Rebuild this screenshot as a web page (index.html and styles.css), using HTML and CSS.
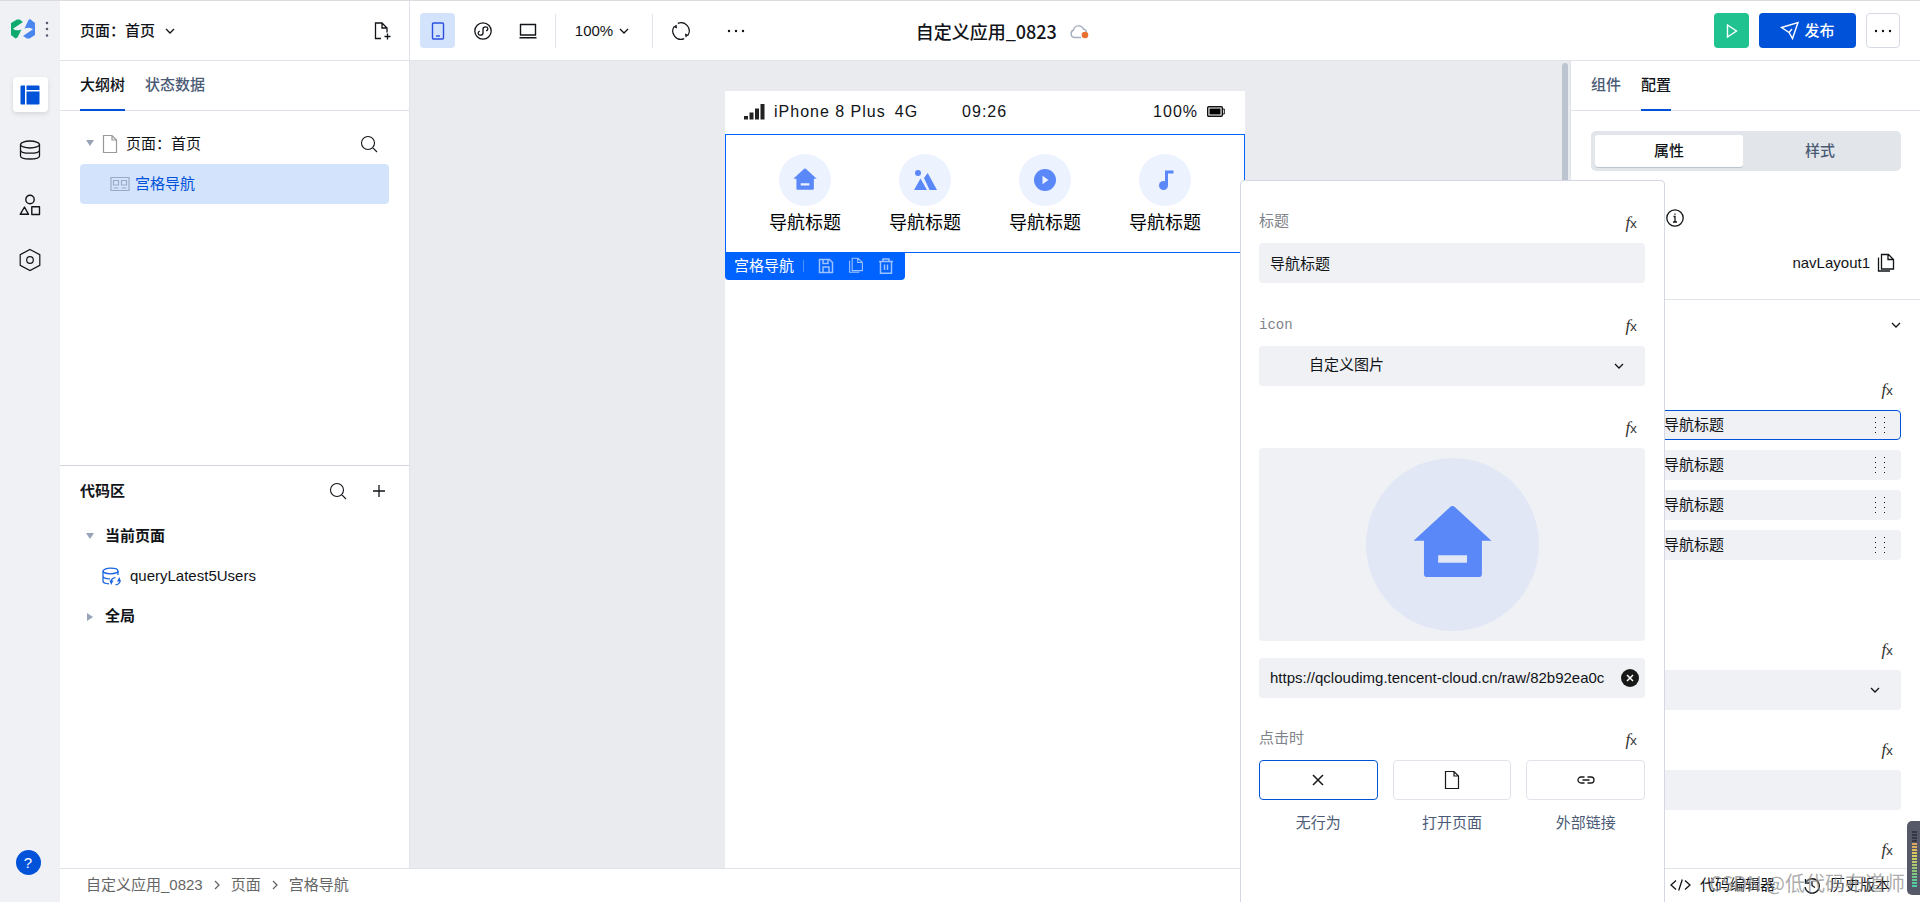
FILE: index.html
```html
<!DOCTYPE html>
<html lang="zh-CN">
<head>
<meta charset="utf-8">
<title>自定义应用_0823</title>
<link rel="stylesheet" href="styles.css">
</head>
<body>
<svg class="sprite" aria-hidden="true">
  <symbol id="chev" viewBox="0 0 10 10"><path d="M1 3l4 4 4-4" fill="none" stroke="currentColor" stroke-width="1.3"/></symbol>
  <symbol id="chev-r" viewBox="0 0 10 10"><path d="M3 1l4 4-4 4" fill="none" stroke="currentColor" stroke-width="1.3"/></symbol>
  <symbol id="search" viewBox="0 0 18 18"><path d="M8 1.5a6.5 6.5 0 1 0 0 13a6.5 6.5 0 1 0 0-13M12.7 12.7L17 17" fill="none" stroke="currentColor" stroke-width="1.1"/></symbol>
  <symbol id="page" viewBox="0 0 16 20"><path d="M1.5 1.5h8.500l4.500 4.500v12.500h-13zM10 1.500v4.500h4.500" fill="none" stroke="currentColor" stroke-width="1.2"/></symbol>
  <symbol id="copy" viewBox="0 0 18 20"><path d="M4.500 1.500h7l5 5v9.500h-12zM11 1.500v5h5.500M1.500 4.500v13.500h11.500" fill="none" stroke="currentColor" stroke-width="1.3"/></symbol>
  <symbol id="dots" viewBox="0 0 18 6"><path d="M2 3h.01M9 3h.01M16 3h.01" fill="none" stroke="currentColor" stroke-width="2.400" stroke-linecap="round"/></symbol>
  <symbol id="grip" viewBox="0 0 12 18"><path d="M1 1h1v1h-1zM10 1h1v1h-1zM1 6h1v1h-1zM10 6h1v1h-1zM1 11h1v1h-1zM10 11h1v1h-1zM1 16h1v1h-1zM10 16h1v1h-1z" fill="currentColor"/></symbol>
  <symbol id="house" viewBox="0 0 100 100"><path fill-rule="evenodd" fill="#5a88f8" d="M48.500 28.500q1.500-1.500 3 0L72.500 47.800H67V67q0 1.800-1.800 1.800H35.300q-1.800 0-1.800-1.800V47.800H27.500zM41.700 56.200v4.400h16.700v-4.400z"/></symbol>
</svg>

<div class="app">
  <nav class="rail" aria-label="主导航">
    <div class="brand">
      <svg width="24" height="20" viewBox="0 0 24 20"><path fill="#0faa70" d="M0 4L6 .5h2.500L12 3 2 9.800q3 2.700 8.500.7L6.500 18.500l-2 1L0 16z"/><path fill="#4a86f0" d="M24 16l-5.500 3.500H16L12 17l10-6.800q-3-2.700-8.500-.7L17.500 1l1.500-1L24 4z"/></svg>
      <svg width="4" height="18" viewBox="0 0 4 18"><path d="M2 3h.01M2 9h.01M2 15.500h.01" stroke="#555e70" stroke-width="2.600" stroke-linecap="round"/></svg>
    </div>
    <button class="rail-btn active" aria-label="页面"><svg width="20" height="20" viewBox="0 0 20 20"><path fill="#0052d9" d="M1.500.5H5v19H1.500Q.5 19.500.5 18.500v-17q0-1 1-1zM6.500.5h12q1 0 1 1V5h-13zM6.500 6.500h13v12q0 1-1 1h-12z"/></svg></button>
    <button class="rail-btn" aria-label="数据源"><svg width="22" height="20" viewBox="0 0 22 20" fill="none" stroke="currentColor" stroke-width="1.300"><ellipse cx="11" cy="4.500" rx="9.500" ry="3.500"/><path d="M1.500 4.500v11.500c0 4 19 4 19 0V4.500M1.500 10.200c0 4 19 4 19 0"/></svg></button>
    <button class="rail-btn" aria-label="组件库"><svg width="22" height="22" viewBox="0 0 22 22" fill="none" stroke="currentColor" stroke-width="1.400"><circle cx="11" cy="5.500" r="4.200"/><path d="M5.500 13L9.500 20.300H1.200zM12.800 12.800h7.700v7.700h-7.700z" stroke-linejoin="round"/></svg></button>
    <button class="rail-btn" aria-label="设置"><svg width="22" height="24" viewBox="0 0 22 24" fill="none" stroke="currentColor" stroke-width="1.200"><path d="M11 1.500l9.800 5.200v10.600L11 22.500 1.200 17.300V6.700z"/><circle cx="11" cy="12" r="3.300"/></svg></button>
    <button class="help" aria-label="帮助">?</button>
  </nav>

  <header class="page-head">
    <button class="page-pick">页面：首页 <svg width="10" height="10"><use href="#chev"/></svg></button>
    <button class="bare" aria-label="新建页面"><svg width="18" height="20" viewBox="0 0 18 20" fill="none" stroke="currentColor" stroke-width="1.300"><path d="M8 17.500H2.500V2H9l5 5v4.500M9 2v5h5M14.500 12.500v6M11.500 15.500h6"/></svg></button>
  </header>

  <header class="toolbar">
    <div class="tools">
      <button class="tool on" aria-label="手机"><svg width="14" height="20" viewBox="0 0 14 20" fill="none" stroke="currentColor" stroke-width="1.400"><rect x="1.500" y="2" width="11" height="16" rx="1"/><path d="M5 15h4"/></svg></button>
      <button class="tool" aria-label="小程序"><svg width="18" height="18" viewBox="0 0 18 18" fill="none" stroke="currentColor" stroke-width="1.300"><circle cx="9" cy="9" r="8.200"/><path d="M5.800 9c-2.500 1-2 4.200.5 4.200 1.500 0 2.700-.9 2.700-2.200V7c0-1.300 1.200-2.200 2.700-2.200 2.500 0 3 3.200.5 4.200"/></svg></button>
      <button class="tool" aria-label="电脑"><svg width="18" height="16" viewBox="0 0 18 16" fill="none" stroke="currentColor" stroke-width="1.400"><path d="M1.500 1.500h15v10.500h-15zM.5 14.800h17"/></svg></button>
      <button class="zoom">100% <svg width="10" height="10"><use href="#chev"/></svg></button>
      <button class="tool" aria-label="刷新"><svg width="18" height="18" viewBox="0 0 18 18"><path d="M5.800 1.400A8.200 8.200 0 0 1 15.800 13.500M12.200 16.600A8.200 8.200 0 0 1 2.200 4.500" fill="none" stroke="currentColor" stroke-width="1.200"/><path d="M1.500 5l3-2.500.5 4zM16.500 13l-3 2.500-.5-4z" fill="currentColor"/></svg></button>
      <button class="tool" aria-label="更多工具"><svg width="18" height="6"><use href="#dots"/></svg></button>
    </div>
    <div class="title"><h1>自定义应用_0823</h1>
      <svg width="20" height="18" viewBox="0 0 20 18"><path d="M12 15.500H5A4 4 0 0 1 4.500 8 5.300 5.300 0 0 1 14.500 7Q17 7.500 17.500 10" fill="none" stroke="#a4aebd" stroke-width="1.400"/><circle cx="16" cy="13" r="3.300" fill="#e8702e"/></svg></div>
    <div class="actions">
      <button class="run" aria-label="预览"><svg width="12" height="16" viewBox="0 0 12 16"><path d="M1.500 2l9 6-9 6z" fill="none" stroke="#fff" stroke-width="1.400"/></svg></button>
      <button class="publish"><svg width="20" height="20" viewBox="0 0 20 20" fill="none" stroke="#fff" stroke-width="1.400"><path d="M1.500 6.500L18 1.500l-5.500 16-3.500-6zM9 11.500L12 8"/></svg>发布</button>
      <button class="more" aria-label="更多"><svg width="18" height="6"><use href="#dots"/></svg></button>
    </div>
  </header>

  <aside class="left">
    <section class="pane outline">
      <div class="tabs"><button class="tab on">大纲树</button><button class="tab">状态数据</button></div>
      <div class="tree">
        <div class="row"><span class="caret down"></span><svg class="muted" width="16" height="20"><use href="#page"/></svg><span class="grow">页面：首页</span><button class="bare" aria-label="搜索"><svg width="18" height="18"><use href="#search"/></svg></button></div>
        <div class="row picked"><svg width="20" height="16" viewBox="0 0 20 16" fill="none" stroke="#9aaac6" stroke-width="1.200"><path d="M1 1.500h18v13H1zM3.500 4.500h5v4.500h-5zM11.500 4.500h5v4.500h-5zM3.500 12h5M11.500 12h5"/></svg><span>宫格导航</span></div>
      </div>
    </section>
    <section class="pane code">
      <div class="code-head"><h2>代码区</h2><button class="bare" aria-label="搜索代码"><svg width="18" height="18"><use href="#search"/></svg></button><button class="bare" aria-label="添加"><svg width="12" height="12" viewBox="0 0 12 12"><path d="M6 0v12M0 6h12" stroke="currentColor" stroke-width="1.300"/></svg></button></div>
      <div class="row group"><span class="caret down"></span>当前页面</div>
      <div class="row query"><svg width="19" height="19" viewBox="0 0 19 19" fill="none" stroke="#1a66e0" stroke-width="1.300"><ellipse cx="8.500" cy="4" rx="7.500" ry="2.800"/><path d="M1 4v10c0 1.500 2 2.600 6 2.800M16 4v4M1 9c0 2 3 3 7 2.800"/><path d="M9 14.500q.5-3.500 4.500-3.800M18 14q-.5 3.500-4.500 3.800"/><path stroke="none" d="M7.500 13.500h4l-2.300 4.500zM19 14.500h-4l2.300-4.500z" fill="#1a66e0"/></svg><span>queryLatest5Users</span></div>
      <div class="row group"><span class="caret side"></span>全局</div>
    </section>
  </aside>

  <main class="canvas">
    <div class="phone">
      <div class="status">
        <svg width="21" height="16" viewBox="0 0 21 16"><path fill="#222" d="M0 12h4v3.500H0zM5.500 8.500h4v7h-4zM11 4.500h4v11h-4zM16.500 0h4v15.500h-4z"/></svg>
        <span>iPhone 8 Plus</span><span>4G</span><span class="clock">09:26</span><span>100%</span>
        <svg width="18" height="11" viewBox="0 0 18 11"><rect x=".7" y=".7" width="14.600" height="9.600" rx="1" fill="none" stroke="#111" stroke-width="1.400"/><path fill="#000" d="M2.500 2.500h11v6h-11z"/><path d="M15.500 3h1.800v5h-1.800" fill="none" stroke="#111"/></svg>
      </div>
      <div class="nav-grid">
        <a href="#home"><svg width="52" height="52" viewBox="0 0 100 100"><circle cx="50" cy="50" r="50" fill="#edf2ff"/><use href="#house"/></svg>导航标题</a>
        <a href="#photo"><svg width="52" height="52" viewBox="0 0 52 52"><circle cx="26" cy="26" r="26" fill="#edf2ff"/><path fill="#5a88f8" d="M15 36l6.500-11.500L28 36zM25 24l3.700-5L38 36h-7.500z"/><circle cx="19" cy="19" r="3" fill="#5a88f8"/></svg>导航标题</a>
        <a href="#video"><svg width="52" height="52" viewBox="0 0 52 52"><circle cx="26" cy="26" r="26" fill="#edf2ff"/><circle cx="26" cy="26" r="11" fill="#5a88f8"/><path fill="#edf2ff" d="M23.500 21.800l6 4.200-6 4.200z"/></svg>导航标题</a>
        <a href="#music"><svg width="52" height="52" viewBox="0 0 52 52"><circle cx="26" cy="26" r="26" fill="#edf2ff"/><path d="M27.500 31V18h7" fill="none" stroke="#5a88f8" stroke-width="3"/><circle cx="24.500" cy="31.500" r="4.500" fill="#5a88f8"/></svg>导航标题</a>
      </div>
      <div class="tag"><span>宫格导航</span><i></i>
        <button class="bare" aria-label="保存"><svg width="16" height="16" viewBox="0 0 16 16" fill="none" stroke="currentColor" stroke-width="1.500"><path d="M1.500 1.500h10l3 3v10h-13zM5 14V9h6v5M5 2v3.500h5V2"/></svg></button>
        <button class="bare" aria-label="复制"><svg width="16" height="17"><use href="#copy"/></svg></button>
        <button class="bare" aria-label="删除"><svg width="16" height="16" viewBox="0 0 16 16" fill="none" stroke="currentColor" stroke-width="1.500"><path d="M1 3.500h14M5 3V1h6v2M2.500 3.500v11.700h11V3.500M6.500 6.500v5.500M9.500 6.500v5.500"/></svg></button>
      </div>
    </div>
    <div class="scroll-thumb"></div>
  </main>

  <aside class="right">
    <div class="tabs"><button class="tab">组件</button><button class="tab on">配置</button></div>
    <div class="config">
      <div class="segment"><button class="seg on">属性</button><button class="seg">样式</button></div>
      <div class="info"><svg width="18" height="18" viewBox="0 0 18 18" fill="none" stroke="currentColor" stroke-width="1.300"><circle cx="9" cy="9" r="8.200"/><path d="M7.500 7.500H9V13M7 13h4M9 4.500v1.300"/></svg></div>
      <div class="ident"><span>navLayout1</span><button class="bare" aria-label="复制标识"><svg width="18" height="20"><use href="#copy"/></svg></button></div>
    </div>
    <div class="config props">
      <div class="fold"><button class="bare" aria-label="收起"><svg width="10" height="10"><use href="#chev"/></svg></button></div>
      <div class="label"><button class="fx"><i>f</i>x</button></div>
      <div class="items">
        <button class="item on"><span>导航标题</span><svg width="12" height="18"><use href="#grip"/></svg></button>
        <button class="item"><span>导航标题</span><svg width="12" height="18"><use href="#grip"/></svg></button>
        <button class="item"><span>导航标题</span><svg width="12" height="18"><use href="#grip"/></svg></button>
        <button class="item"><span>导航标题</span><svg width="12" height="18"><use href="#grip"/></svg></button>
      </div>
      <div class="label"><button class="fx"><i>f</i>x</button></div>
      <div class="pick"><select aria-label="布局"><option></option></select><svg width="10" height="10"><use href="#chev"/></svg></div>
      <div class="label"><button class="fx"><i>f</i>x</button></div>
      <input class="box" type="text" aria-label="数值">
      <div class="label"><button class="fx"><i>f</i>x</button></div>
    </div>
  </aside>

  <footer class="foot">
    <nav class="crumbs" aria-label="路径"><a href="#app">自定义应用_0823</a><svg width="10" height="10"><use href="#chev-r"/></svg><a href="#page1">页面</a><svg width="10" height="10"><use href="#chev-r"/></svg><a href="#nav">宫格导航</a></nav>
    <div class="foot-tools">
      <button class="bare"><svg width="21" height="12" viewBox="0 0 21 12" fill="none" stroke="currentColor" stroke-width="1.300"><path d="M6 1.500L1 6l5 4.500M15 1.500L20 6l-5 4.500M12.300.5l-3.600 11"/></svg>代码编辑器</button>
      <button class="bare"><svg width="18" height="18" viewBox="0 0 18 18" fill="none" stroke="currentColor" stroke-width="1.300"><path d="M2.500 3v4h4M2.800 6.500A7.200 7.200 0 1 1 2 11M9 5v4.500l3 2"/></svg>历史版本</button>
    </div>
  </footer>

  <form class="popup">
    <div class="label"><label for="f-title">标题</label><button type="button" class="fx"><i>f</i>x</button></div>
    <input class="box" id="f-title" type="text" value="导航标题">
    <div class="label"><label class="mono" for="f-icon">icon</label><button type="button" class="fx"><i>f</i>x</button></div>
    <div class="pick wide"><select id="f-icon"><option>自定义图片</option></select><svg width="10" height="10"><use href="#chev"/></svg></div>
    <div class="label"><button type="button" class="fx"><i>f</i>x</button></div>
    <div class="preview"><svg width="173" height="173" viewBox="0 0 100 100"><circle cx="50" cy="50" r="50" fill="#e1e7f5"/><use href="#house"/></svg></div>
    <div class="url"><input class="box" type="text" aria-label="图片地址" value="https://qcloudimg.tencent-cloud.cn/raw/82b92ea0c"><button type="button" class="bare" aria-label="清除"><svg width="18" height="18" viewBox="0 0 18 18"><circle cx="9" cy="9" r="9" fill="#181818"/><path d="M6 6l6 6M12 6l-6 6" stroke="#fff" stroke-width="1.500"/></svg></button></div>
    <div class="label"><span>点击时</span><button type="button" class="fx"><i>f</i>x</button></div>
    <div class="choices">
      <button type="button" class="choice on"><span><svg width="12" height="12" viewBox="0 0 12 12"><path d="M1 1l10 10M11 1L1 11" stroke="currentColor" stroke-width="1.500"/></svg></span>无行为</button>
      <button type="button" class="choice"><span><svg width="16" height="20"><use href="#page"/></svg></span>打开页面</button>
      <button type="button" class="choice"><span><svg width="18" height="8" viewBox="0 0 18 8" fill="none" stroke="currentColor" stroke-width="1.300"><path d="M7.500 7H4A3 3 0 0 1 4 1h3.500M10.500 1H14a3 3 0 0 1 0 6h-3.500M5.500 4h7"/></svg></span>外部链接</button>
    </div>
  </form>

  <div class="watermark">CSDN @低代码布道师</div>
  <div class="meter"><div></div></div>
</div>
</body>
</html>
```

FILE: styles.css
```css
:root {
  --line: #e0e3e9;
  --blue: #0052d9;
  --fill: #f0f1f5;
  --ink: #111418;
  --slate: #4b5b76;
}
* { box-sizing: border-box; }
body {
  margin: 0;
  color: var(--ink);
  font: 15px/20px "Liberation Sans", "Noto Sans CJK SC", sans-serif;
}
button, input, select {
  margin: 0;
  padding: 0;
  border: 0;
  background: none;
  color: inherit;
  font: inherit;
  cursor: pointer;
}
a { color: inherit; text-decoration: none; }
h1, h2 { margin: 0; }
svg { display: block; flex: none; }
.sprite { display: none; }
.bare { display: flex; align-items: center; }

.app {
  position: relative;
  display: grid;
  grid-template: 60px minmax(0, 1fr) 34px / 60px 350px minmax(0, 1fr) 350px;
  height: 100vh;
  overflow: hidden;
  border-top: 1px solid #dcdcde;
  background: #fff;
}

/* rail */
.rail {
  grid-row: 1 / 4;
  display: flex;
  flex-direction: column;
  align-items: center;
  gap: 20px;
  padding: 18px 0 27px;
  background: var(--fill);
}
.brand { display: flex; align-items: center; gap: 10px; height: 20px; margin-bottom: 18px; }
.rail-btn { display: grid; place-items: center; width: 35px; height: 35px; border-radius: 4px; }
.rail-btn.active { background: #fff; box-shadow: 0 2px 5px #0000001c; }
.help {
  width: 25px;
  height: 25px;
  margin: auto 4px 0 0;
  border-radius: 50%;
  background: var(--blue);
  color: #fff;
}

/* headers */
.page-head, .toolbar { display: flex; align-items: center; border-bottom: 1px solid var(--line); }
.page-head { justify-content: space-between; padding: 0 18px 0 20px; border-right: 1px solid var(--line); }
.page-pick { display: flex; align-items: center; gap: 10px; font-weight: 500; }
.toolbar { grid-column: 3 / 5; padding: 0 20px 0 10px; }
.tools { flex: 11 1 0; display: flex; align-items: center; gap: 10px; }
.tool { display: grid; place-items: center; width: 35px; height: 35px; border-radius: 4px; }
.tool.on { background: #d4e3fc; color: #2b50e0; }
.tool:last-child { margin-left: 10px; }
.zoom {
  display: flex;
  align-items: center;
  justify-content: center;
  gap: 6px;
  width: 98px;
  height: 34px;
  border: solid var(--line);
  border-width: 0 1px;
}
.zoom svg { margin-right: 4px; }
.title { display: flex; align-items: center; gap: 12px; }
.title h1 { font: 500 18px/24px "Noto Sans CJK SC", sans-serif; }
.actions { flex: 18 1 0; display: flex; justify-content: flex-end; gap: 10px; }
.actions button { display: flex; align-items: center; justify-content: center; gap: 4px; height: 35px; border-radius: 4px; }
.actions .run { width: 35px; background: #20c390; }
.actions .publish { width: 97px; background: var(--blue); color: #fff; font-weight: 500; }
.actions .more { width: 34px; border: 1px solid #d6dae6; }

/* tabs */
.tabs { display: flex; gap: 20px; height: 50px; padding: 0 20px; border-bottom: 1px solid var(--line); }
.tab { height: 50px; border-bottom: 2px solid transparent; color: var(--slate); font-weight: 500; line-height: 48px; }
.tab.on { border-color: var(--blue); color: var(--ink); }

/* left panels */
.left { display: flex; flex-direction: column; border-right: 1px solid var(--line); }
.pane { flex: 1 1 0; }
.outline { flex-basis: 2px; }
.code { border-top: 1px solid #d3d7e2; }
.tree { padding: 13px 20px; }
.row { display: flex; align-items: center; height: 40px; }
.tree .row { padding: 0 11px 0 6px; }
.grow { flex: 1; margin-left: 8px; }
.muted { margin-left: 8px; color: #999; }
.tree .picked { gap: 5px; padding-left: 30px; border-radius: 4px; background: #d4e3fc; color: var(--blue); }
.caret { border: 4px solid transparent; }
.caret.down { margin-top: 4px; border-top: 6px solid #97a3b7; }
.tree .caret.down { margin-top: 2px; }
.caret.side { margin: 2px -3px 0 1px; border-left: 6px solid #97a3b7; }
.code-head { display: flex; align-items: center; height: 50px; padding: 0 24px 0 20px; gap: 26px; }
h2 { flex: 1; font-size: 15px; font-weight: 700; }
.group { gap: 11px; padding-left: 26px; font-weight: 700; }
.query { gap: 9px; padding-left: 42px; }

/* canvas */
.canvas { position: relative; display: flex; justify-content: center; padding: 30px 10px 0 0; background: #eaebef; }
.phone { width: 520px; background: #fff; }
.status { display: flex; align-items: center; height: 43px; padding: 0 20px 2px 19px; font-size: 16px; letter-spacing: 1px; gap: 9px; }
.clock { flex: 1; margin-left: 35px; }
.nav-grid { display: grid; grid-template-columns: repeat(4, 1fr); padding: 19px 19px 12px; border: 1px solid #0062ff; }
.nav-grid a { display: flex; flex-direction: column; align-items: center; color: #000; font-size: 18px; line-height: 34px; }
.tag { display: flex; align-items: center; gap: 14px; width: 180px; height: 27px; padding: 0 0 2px 9px; border-radius: 0 0 4px 4px; background: #0062ff; color: #fff; }
.tag span { margin-right: -5px; }
.tag i { width: 1px; height: 12px; background: #4d90ff; }
.tag .bare { color: #9cc2ff; }
.scroll-thumb { position: absolute; top: 2px; right: 2px; width: 6px; height: 400px; border-radius: 3px; background: #bcc4d0; }

/* right panel */
.right { overflow: hidden; border-left: 1px solid var(--line); }
.config { padding: 20px 19px 0 20px; }
.segment { display: flex; height: 40px; padding: 4px; border-radius: 5px; background: #e2e6ea; }
.seg { flex: 1; border-radius: 3px; color: var(--slate); font-weight: 500; }
.seg.on { flex: 0 0 148px; background: #fff; box-shadow: 0 1px #bcc5d0; color: var(--ink); }
.info { display: flex; align-items: center; height: 40px; margin-top: 27px; padding-left: 75px; }
.ident { display: flex; align-items: center; justify-content: flex-end; gap: 7px; height: 50px; margin-bottom: 11px; padding-right: 6px; }
.props { padding-top: 0; border-top: 1px solid var(--line); }
.fold { display: flex; justify-content: flex-end; align-items: center; height: 50px; margin-bottom: 20px; }
.label { display: flex; align-items: center; height: 40px; color: #80838a; }
.fx { display: flex; align-items: baseline; margin-left: auto; padding-right: 8px; color: #333; font: 13px/18px "Noto Sans", sans-serif; }
.fx i { font: italic 17px/18px "Liberation Serif", serif; }
.props .label { margin-top: 20px; }
.items { display: grid; gap: 10px; margin-bottom: 70px; }
.item { display: flex; align-items: center; justify-content: space-between; height: 30px; padding: 0 15px 0 73px; border-radius: 4px; background: var(--fill); }
.item.on { padding: 0 14px 0 72px; border: 1px solid var(--blue); }
.props .fold + .label, .props .items + .label { margin-top: 0; }
.pick, .url { display: grid; align-items: center; }
.pick > *, .url > * { grid-area: 1 / 1; }
.pick select, .box { display: block; width: 100%; height: 40px; padding: 0 11px 2px; border-radius: 4px; background: var(--fill); appearance: none; }
.pick svg { justify-self: end; margin-right: 21px; pointer-events: none; }
.pick.wide select { padding-left: 50px; }

/* item editor */
.popup {
  position: absolute;
  top: 179px;
  right: 255px;
  bottom: -8px;
  width: 425px;
  padding: 22px 19px 0 18px;
  border: 1px solid #d3d8e2;
  border-radius: 4px;
  background: #fff;
}
.popup .box + .label { margin-top: 23px; }
.popup .pick + .label { margin-top: 22px; }
.popup .label { padding-bottom: 5px; }
.popup .fx { margin-top: 4px; }
.popup .mono { padding-top: 3px; font: 14px/20px "Liberation Mono", monospace; }
.preview { display: grid; place-items: center; height: 193px; margin-bottom: 17px; border-radius: 4px; background: var(--fill); }
.url .box { padding-right: 40px; }
.url button { justify-self: end; margin-right: 6px; }
.popup .url + .label { margin-top: 22px; }
.choices { display: grid; grid-template-columns: repeat(3, 1fr); gap: 15px; }
.choice { color: var(--slate); }
.choice span { display: grid; place-items: center; height: 40px; margin-bottom: 13px; border: 1px solid #e0e3e9; border-radius: 4px; color: #181818; }
.choice.on span { border-color: var(--blue); }

/* footer */
.foot { grid-column: 2 / 5; display: flex; align-items: center; justify-content: space-between; padding: 0 30px 2px 26px; border-top: 1px solid var(--line); }
.crumbs { display: flex; align-items: center; gap: 9px; color: #666; }
.foot-tools { display: flex; gap: 28px; }
.foot-tools .bare { gap: 9px; }
.watermark { position: absolute; right: 15px; bottom: 6px; color: #8c8c8cbb; font: 20px/26px "Noto Sans CJK SC", sans-serif; }
.meter { position: absolute; right: 0; bottom: 7px; width: 13px; height: 74px; padding: 9px 3px 8px 5px; border-radius: 5px 0 0 5px; background: #565a68; }
.meter div {
  height: 57px;
  background: repeating-linear-gradient(#565a68 0 1px, transparent 1px 3px), linear-gradient(#343846 22%, #dda05c 22%, #d8cf60 45%, #8cc77a 72%, #45d0a8);
}
```
